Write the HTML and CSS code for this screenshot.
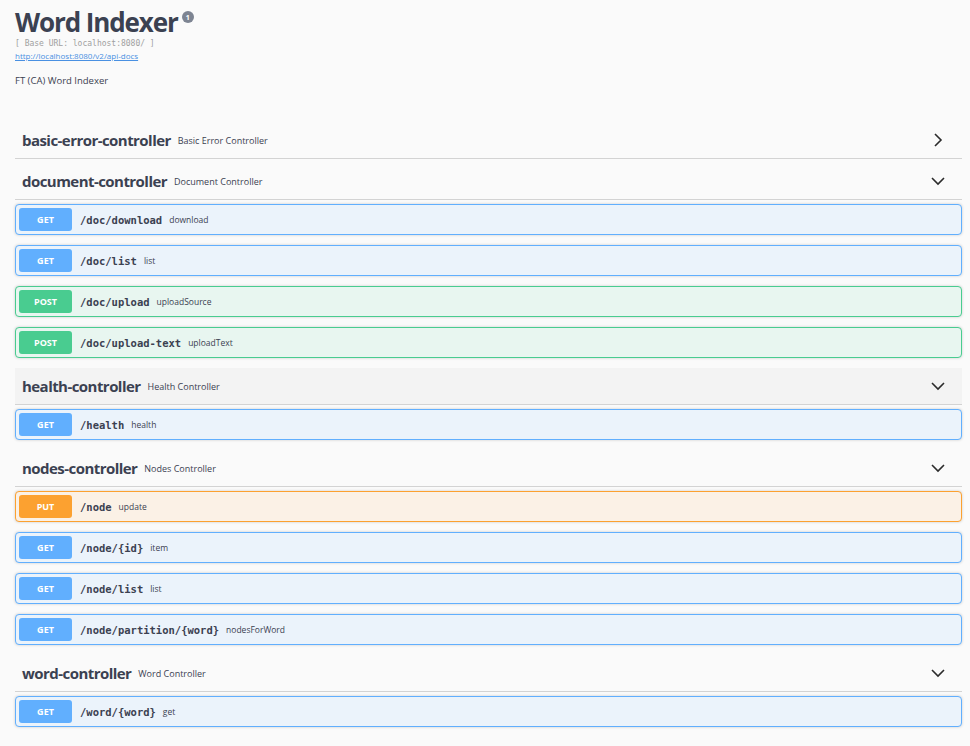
FILE: index.html
```html
<!DOCTYPE html>
<html>
<head>
<meta charset="utf-8">
<link rel="stylesheet" href="styles.css">
</head>
<body>
<div class="wrapper">
  <div class="info">
    <h1 class="title">Word Indexer<span class="version">1</span></h1>
    <div class="base-url">[ Base URL: localhost:8080/ ]</div>
    <a class="spec-link" href="#">http://localhost:8080/v2/api-docs</a>
    <div class="info-desc">FT (CA) Word Indexer</div>
  </div>

  <section class="tag-section">
    <div class="tag">
      <span class="tag-name">basic-error-controller</span>
      <span class="tag-desc">Basic Error Controller</span>
      <svg class="arrow" viewBox="0 0 14 14"><polyline points="4,1 10,7 4,13"/></svg>
    </div>
  </section>

  <section class="tag-section">
    <div class="tag">
      <span class="tag-name">document-controller</span>
      <span class="tag-desc">Document Controller</span>
      <svg class="arrow" viewBox="0 0 14 14"><polyline points="1,4 7,10 13,4"/></svg>
    </div>
    <div class="op get"><span class="method">GET</span><span class="path">/doc/download</span><span class="summary">download</span></div>
    <div class="op get"><span class="method">GET</span><span class="path">/doc/list</span><span class="summary">list</span></div>
    <div class="op post"><span class="method">POST</span><span class="path">/doc/upload</span><span class="summary">uploadSource</span></div>
    <div class="op post"><span class="method">POST</span><span class="path">/doc/upload-text</span><span class="summary">uploadText</span></div>
  </section>

  <section class="tag-section">
    <div class="tag hover">
      <span class="tag-name">health-controller</span>
      <span class="tag-desc">Health Controller</span>
      <svg class="arrow" viewBox="0 0 14 14"><polyline points="1,4 7,10 13,4"/></svg>
    </div>
    <div class="op get"><span class="method">GET</span><span class="path">/health</span><span class="summary">health</span></div>
  </section>

  <section class="tag-section">
    <div class="tag">
      <span class="tag-name">nodes-controller</span>
      <span class="tag-desc">Nodes Controller</span>
      <svg class="arrow" viewBox="0 0 14 14"><polyline points="1,4 7,10 13,4"/></svg>
    </div>
    <div class="op put"><span class="method">PUT</span><span class="path">/node</span><span class="summary">update</span></div>
    <div class="op get"><span class="method">GET</span><span class="path">/node/{id}</span><span class="summary">item</span></div>
    <div class="op get"><span class="method">GET</span><span class="path">/node/list</span><span class="summary">list</span></div>
    <div class="op get"><span class="method">GET</span><span class="path">/node/partition/{word}</span><span class="summary">nodesForWord</span></div>
  </section>

  <section class="tag-section">
    <div class="tag">
      <span class="tag-name">word-controller</span>
      <span class="tag-desc">Word Controller</span>
      <svg class="arrow" viewBox="0 0 14 14"><polyline points="1,4 7,10 13,4"/></svg>
    </div>
    <div class="op get"><span class="method">GET</span><span class="path">/word/{word}</span><span class="summary">get</span></div>
  </section>
</div>
</body>
</html>
```

FILE: styles.css
```css
html, body {
  margin: 0;
  padding: 0;
  background: #fafafa;
}
body {
  font-family: "Open Sans", "Liberation Sans", sans-serif;
  color: #3b4151;
}
.wrapper {
  padding: 7px 8px 0 15px;
}
.title {
  margin: 0;
  font-size: 26px;
  line-height: 30px;
  font-weight: 700;
  letter-spacing: -1.1px;
  color: #3b4151;
  display: flex;
  align-items: flex-start;
}
.version {
  display: inline-flex;
  align-items: center;
  justify-content: center;
  width: 12px;
  height: 12px;
  border-radius: 50%;
  background: #7d8492;
  color: #fff;
  font-size: 7px;
  font-weight: 700;
  letter-spacing: 0;
  line-height: 1;
  margin: 4px 0 0 4px;
}
.base-url {
  margin-top: 1px;
  font-family: "DejaVu Sans Mono", "Liberation Mono", monospace;
  font-size: 8px;
  line-height: 12px;
  color: #a0a0a0;
}
.spec-link {
  display: block;
  font-size: 8px;
  line-height: 12px;
  color: #4990e2;
  text-decoration: underline;
}
.info-desc {
  margin-top: 13px;
  margin-bottom: 35px;
  font-size: 9.5px;
  line-height: 12px;
}
.tag {
  display: flex;
  align-items: center;
  height: 36px;
  padding: 0 17px 0 7px;
  border-bottom: 1px solid #d3d3d3;
  margin-bottom: 4px;
}
.tag.hover {
  background: #f3f3f3;
}
.tag-name {
  font-size: 15px;
  font-weight: 700;
  letter-spacing: -0.55px;
  color: #3b4151;
}
.tag-desc {
  margin-left: 7px;
  font-size: 9px;
  color: #3b4151;
  flex: 1;
}
.arrow {
  width: 14px;
  height: 14px;
  fill: none;
  stroke: #2b2b2b;
  stroke-width: 1.6;
}
.op {
  box-sizing: border-box;
  display: flex;
  align-items: center;
  height: 31px;
  padding: 3px;
  margin-bottom: 10px;
  border: 1px solid #61affe;
  border-radius: 4px;
  background: #ebf3fb;
  box-shadow: 0 0 3px rgba(0, 0, 0, 0.19);
}
.op.post {
  border-color: #49cc90;
  background: #e8f6f0;
}
.op.put {
  border-color: #fca130;
  background: #fbf1e6;
}
.method {
  display: flex;
  align-items: center;
  justify-content: center;
  width: 53px;
  height: 23px;
  border-radius: 3px;
  background: #61affe;
  color: #fff;
  font-size: 9px;
  font-weight: 700;
}
.post .method { background: #49cc90; }
.put .method { background: #fca130; }
.path {
  margin-left: 8px;
  font-family: "DejaVu Sans Mono", "Liberation Mono", monospace;
  font-size: 10.5px;
  font-weight: 700;
  color: #3b4151;
}
.summary {
  margin-left: 7px;
  font-size: 8.5px;
  color: #3b4151;
}
```
